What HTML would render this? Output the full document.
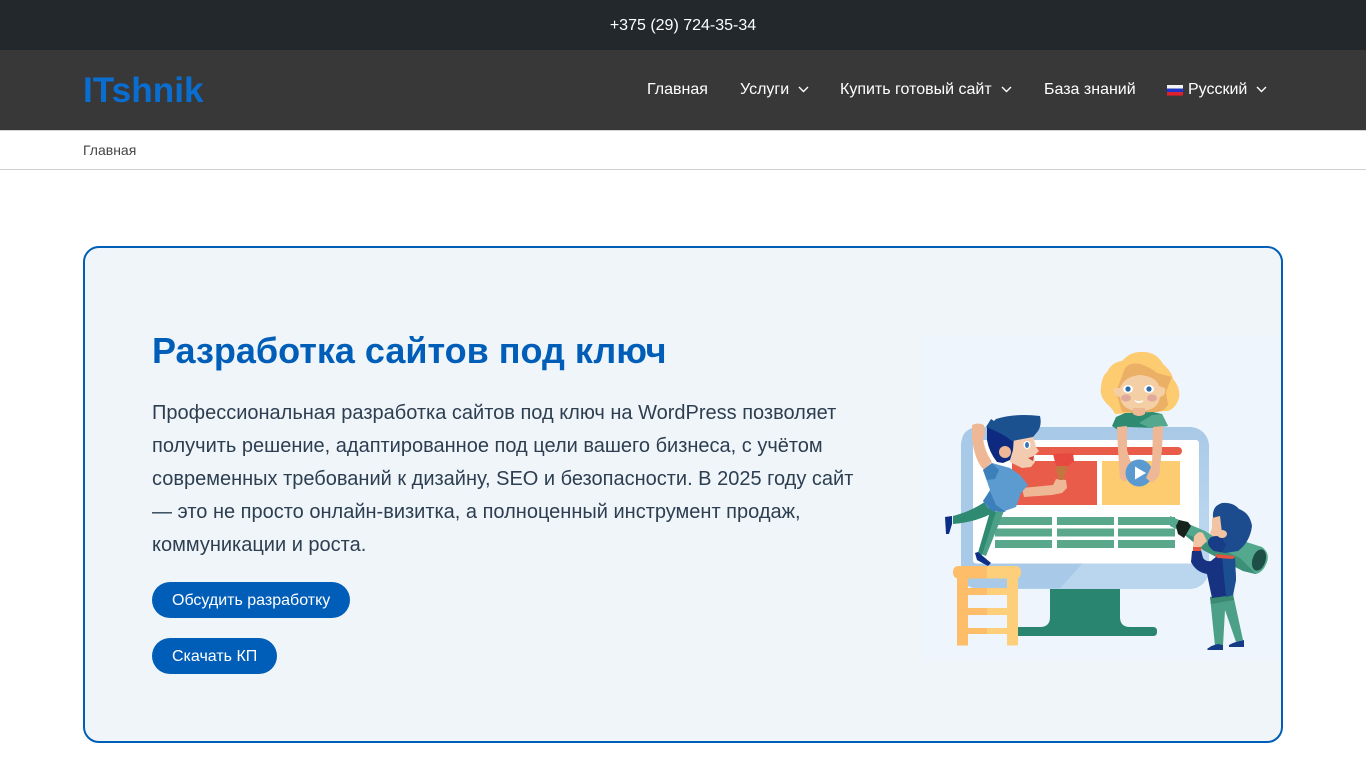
<!DOCTYPE html>
<html lang="ru">
<head>
<meta charset="utf-8">
<title>Разработка сайтов под ключ</title>
<style>
*{box-sizing:border-box}
html,body{margin:0;padding:0;width:1366px;height:768px;overflow:hidden;background:#fff;font-family:"Liberation Sans",sans-serif}
.abs{position:absolute;white-space:nowrap}
#top{position:absolute;left:0;top:1px;width:1366px;height:49px;color:#fff;font-size:16px;line-height:50px;text-align:center}
#topbg{position:absolute;left:0;top:0;width:1366px;height:50px;background:#23282c}
#nav{position:absolute;left:0;top:50px;width:1366px;height:80px;background:#383838}
#logo{left:83px;top:69px;font-size:35.2px;line-height:44px;font-weight:700;color:#0a6ed1}
.n{top:80px;color:#fff;font-size:16px;line-height:20px}
#crumb{position:absolute;left:0;top:130px;width:1366px;height:40px;border-top:1px solid #d5d5d5;border-bottom:1px solid #d0d0d0;background:#fff}
#crumb span{position:absolute;left:83px;top:10px;font-size:14px;line-height:18px;color:#444}
#hero{position:absolute;left:83px;top:246px;width:1200px;height:497px;background:#f0f5fa;border:2px solid #005eb8;border-radius:16px}
h1{position:absolute;margin:0;left:152px;top:328px;font-size:36px;line-height:46px;font-weight:700;color:#005eb8;white-space:nowrap}
#p{position:absolute;left:152px;top:397px;margin:0;font-size:20px;line-height:33px;color:#2c3e50;white-space:nowrap}
.b{position:absolute;left:152px;height:36px;border-radius:18px;background:#005eb8;color:#fff;font-size:16px;line-height:37px;padding:0 20px;white-space:nowrap}
svg{position:absolute;left:0;top:0}
</style>
</head>
<body>
<div id="topbg"></div>
<div id="top">+375 (29) 724-35-34</div>
<div id="nav"></div>
<div class="abs" id="logo">ITshnik</div>
<div class="abs n" style="left:647px">Главная</div>
<div class="abs n" style="left:740px">Услуги</div>
<div class="abs n" style="left:840px">Купить готовый сайт</div>
<div class="abs n" style="left:1044px">База знаний</div>
<div class="abs n" style="left:1188px">Русский</div>
<div id="crumb"><span>Главная</span></div>
<div id="hero"></div>
<h1>Разработка сайтов под ключ</h1>
<p id="p">Профессиональная разработка сайтов под ключ на WordPress позволяет<br>получить решение, адаптированное под цели вашего бизнеса, с учётом<br>современных требований к дизайну, SEO и безопасности. В 2025 году сайт<br>— это не просто онлайн-визитка, а полноценный инструмент продаж,<br>коммуникации и роста.</p>
<div class="b" style="top:582px">Обсудить разработку</div>
<div class="b" style="top:638px">Скачать КП</div>

<svg width="1366" height="768" viewBox="0 0 1366 768">
<defs>
<linearGradient id="mon" x1="0" y1="427" x2="0" y2="520" gradientUnits="userSpaceOnUse">
<stop offset="0" stop-color="#a8c9e7"/><stop offset="1" stop-color="#bad6ef"/>
</linearGradient>
<filter id="soft" x="-5%" y="-5%" width="110%" height="110%"><feGaussianBlur stdDeviation="0.35"/></filter>
</defs>
<!-- nav chevrons -->
<g fill="none" stroke="#fff" stroke-width="1.4">
<path d="M799 87l4.500 4.500 4.500-4.500"/>
<path d="M1002 87l4.500 4.500 4.500-4.500"/>
<path d="M1257 87l4.500 4.500 4.500-4.500"/>
</g>
<!-- flag -->
<rect x="1167" y="85" width="16" height="3.600" fill="#f4f4f6"/>
<rect x="1167" y="88.600" width="16" height="3.400" fill="#2233cc"/>
<rect x="1167" y="92" width="16" height="3.600" fill="#e0202c"/>

<!-- illustration background -->
<rect x="921" y="336" width="360" height="326" fill="#eef5fd"/>

<g filter="url(#soft)">
<!-- monitor stand -->
<path d="M1050 586H1120V617Q1120 627 1130 627H1153Q1157 627 1157 631V632Q1157 636 1153 636H1012V627H1040Q1050 627 1050 617Z" fill="#2b8570"/>
<!-- monitor -->
<rect x="961" y="427" width="248" height="162" rx="19" fill="url(#mon)"/>
<path d="M961 446Q961 427 980 427H1100V563H1083L1060 588.500H980Q961 589 961 570Z" fill="#a8c9e7"/>
<rect x="973" y="440" width="226" height="123.500" rx="3" fill="#fff"/>
<rect x="1000" y="447" width="182" height="8" rx="4" fill="#e95b48"/>
<rect x="1012" y="461" width="85" height="44" fill="#e95b48"/>
<rect x="1102" y="461" width="78" height="44" fill="#fdcb70"/>
<g fill="#5aa88c">
<rect x="995" y="517" width="57" height="8"/><rect x="1057" y="517" width="57" height="8"/><rect x="1118" y="517" width="57" height="8"/>
<rect x="995" y="528.500" width="57" height="8"/><rect x="1057" y="528.500" width="57" height="8"/><rect x="1118" y="528.500" width="57" height="8"/>
<rect x="995" y="540" width="57" height="8"/><rect x="1057" y="540" width="57" height="8"/><rect x="1118" y="540" width="57" height="8"/>
</g>

<!-- stool -->
<path d="M968 578H1007V588H978Q970 587 968 582Z" fill="#a8c9e7"/>
<rect x="968" y="595" width="39" height="13" fill="#eef5fd"/>
<g fill="#fdbd69">
<path d="M959 566H987V578.500H959Q953 578.500 953 572.500Q953 566 959 566Z"/>
<rect x="957" y="578" width="11" height="67.500"/>
<rect x="968" y="588" width="19" height="7"/><rect x="968" y="608" width="19" height="7"/><rect x="968" y="628" width="19" height="6"/>
</g>
<g fill="#fdcf7a">
<path d="M987 566H1015Q1021 566 1021 572.500Q1021 578.500 1015 578.500H987Z"/>
<rect x="1007" y="578" width="11" height="67.500"/>
<rect x="987" y="588" width="20" height="7"/><rect x="987" y="608" width="20" height="7"/><rect x="987" y="628" width="20" height="6"/>
</g>

<!-- boy -->
<path d="M990 512L1004 511L986 556L978 553Z" fill="#4ea088"/>
<path d="M990 512L996 512L982 555L978 553Z" fill="#2d8a70"/>
<path d="M986 501Q972 511 953 516L953 524Q978 522 996 511Z" fill="#2f8a70"/>
<path d="M945 517L952 516L952 524L949 534L946 534Z" fill="#0f2f86"/>
<path d="M975 553L978 552L991 563L988 566L977 560Z" fill="#0f2f86"/>
<path d="M972 425Q978 422 984 425L985 434L983 438Q984 450 992 462L984 470Q976 462 973 445L972 437Z" fill="#eeb795"/>
<path d="M1022 488L1053 485L1056 479L1066 480L1067 488L1062 493L1052 495L1024 497Z" fill="#eeb795"/>
<path d="M1055 465H1068L1063 480H1059Z" fill="#c2773f"/>
<path d="M1053 454L1073 453L1074 461L1068 466H1056Z" fill="#e7493f"/>
<path d="M983 470L992 463L1010 468L1020 475L1028 485L1021 493L1016 507L1002 512L988 508L983 501L990 490Z" fill="#5b9bd0"/>
<path d="M983 470L992 463L999 470L995 479L987 480Z" fill="#3e7fba"/>
<path d="M983 501L990 491L996 505L1006 512L992 511Z" fill="#3e7fba"/>
<path d="M1011 440L1033 436L1036 447L1039 451L1034 456L1035 462L1031 467L1022 468L1010 462Z" fill="#f2cbb0"/>
<path d="M987 427L1014 436L1013 450L1010 460L1003 463L997 462Q989 452 987 440Z" fill="#0c2a80"/>
<circle cx="1005" cy="452" r="6" fill="#eeb795"/>
<path d="M986 427L991 419L994 421L996 419Q1015 413 1040 416Q1042 425 1038 431L1033 437L1012 441Q1002 433 986 427Z" fill="#1a5190"/>
<ellipse cx="1027" cy="445" rx="3.500" ry="4" fill="#fff"/>
<ellipse cx="1027" cy="445" rx="2" ry="3" fill="#3279b9"/>
<path d="M1028 458L1034 456L1033 461Z" fill="#c8443c"/>

<!-- girl -->
<path d="M1140 352Q1156 351 1163 364Q1172 372 1173 379Q1181 388 1179 398Q1176 408 1168 411L1115 414Q1112 408 1107 404Q1099 396 1101 387Q1102 376 1107 372Q1112 362 1122 361Q1130 352 1140 352Z" fill="#fdcb70"/>
<path d="M1125 368Q1130 362 1140 364Q1150 367 1157 373L1172 377L1169 384L1166 392L1168 405Q1164 411 1158 412L1122 412L1116 392Z" fill="#ebb065"/>
<path d="M1114 388L1120 388Q1124 377 1139 375Q1156 376 1159 386L1165 388Q1166 396 1160 397Q1158 411 1140 411Q1122 411 1120 397Q1113 396 1114 388Z" fill="#f4cea4"/>
<ellipse cx="1128" cy="389" rx="5" ry="4" fill="#fff"/><ellipse cx="1149" cy="389" rx="5" ry="4" fill="#fff"/>
<circle cx="1128" cy="389" r="2.600" fill="#2c6ba8"/><circle cx="1149" cy="389" r="2.600" fill="#2c6ba8"/>
<ellipse cx="1126" cy="398" rx="5" ry="3.500" fill="#e1a99b"/><ellipse cx="1152" cy="398" rx="5" ry="3.500" fill="#e1a99b"/>
<path d="M1135 400.500Q1139 403 1143 400.500Q1139 404.500 1135 400.500Z" fill="#fff" stroke="#fff"/>
<path d="M1112 426L1116 417L1125 413L1153 412L1162 414L1168 426L1159 427L1155 428L1128 427L1118 430Z" fill="#2f8a6f"/>
<path d="M1139 423L1152 415L1162 414L1168 426L1150 428Z" fill="#52a88e"/>
<path d="M1133 408H1145V414Q1139 418 1133 414Z" fill="#eeb795"/>
<path d="M1117 427L1127 426L1127 450L1133 470L1125 482L1120 478L1118 450Z" fill="#eeb795"/>
<circle cx="1139" cy="473" r="13.500" fill="#5a9ad0"/>
<path d="M1135 466.500L1146 473L1135 479.500Z" fill="#fff"/>
<path d="M1153 427L1163 426L1162 450L1159 476L1152 483L1146 478L1152 465Z" fill="#eeb795"/>

<!-- man -->
<path d="M1210 597L1233 594L1243 640L1236 642L1225 610L1223 646L1215 646Z" fill="#4ea088"/>
<path d="M1210 597L1233 594L1234 600L1211 604Z" fill="#3b8a72"/>
<path d="M1207 649Q1212 645 1218 644L1223 645V650H1208Z" fill="#163a86"/>
<path d="M1229 645Q1234 642 1244 640V647H1229Z" fill="#163a86"/>
<path d="M1170 516L1205 531L1213 536L1240 540L1262 547Q1270 553 1267 562Q1263 573 1255 574L1243 571L1203 550L1180 531L1170 526Z" fill="#52a88e"/>
<path d="M1203 550L1180 531L1178 530L1240 558L1256 574L1243 571Z" fill="#3e9078"/>
<ellipse cx="1259" cy="560" rx="6.500" ry="11" transform="rotate(18 1259 560)" fill="#1f4f45"/>
<path d="M1179 520L1188 522L1191 526L1184 538L1178 534L1176 526Z" fill="#14201e"/>
<path d="M1217 556L1235 558L1236 580L1233 595L1212 598L1207 574Q1196 572 1191 562L1192 551L1201 550L1203 558Q1206 562 1211 561Z" fill="#123280"/>
<path d="M1222 557L1235 558L1236 580L1233 595L1226 597Z" fill="#1c4f92"/>
<path d="M1215 554L1235 556L1233 559L1217 558Z" fill="#e4543f"/>
<path d="M1193 547L1201 546L1201 551L1193 551Z" fill="#e4543f"/>
<path d="M1213 517Q1212 506 1222 503Q1233 502 1239 509Q1250 513 1252 526Q1250 542 1238 551L1225 553L1214 551Q1207 545 1208 541L1214 535Z" fill="#1b4c8e"/>
<path d="M1212 518L1220 516L1222 533L1214 538L1210 533L1212 528Z" fill="#f2c4a3"/>
<path d="M1208 541Q1210 536 1216 536L1222 538L1226 545L1222 552L1214 551Q1207 546 1208 541Z" fill="#123d85"/>
<ellipse cx="1222" cy="534" rx="5" ry="4" fill="#f2c4a3"/>
<path d="M1193 547L1194 537Q1198 530 1203 533L1207 541L1201 547Z" fill="#f2c4a3"/>
</g>
</svg>
</body>
</html>
